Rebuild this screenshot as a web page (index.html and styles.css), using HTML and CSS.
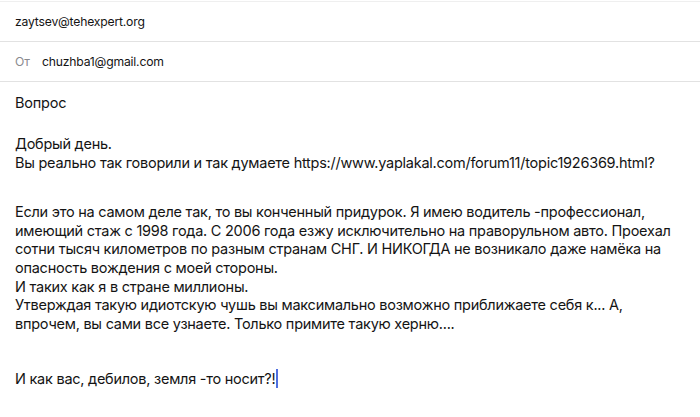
FILE: index.html
```html
<!DOCTYPE html>
<html lang="ru">
<head>
<meta charset="utf-8">
<link rel="stylesheet" href="styles.css">
</head>
<body>
<div class="mail">
  <div class="row row-to"><span class="addr">zaytsev@tehexpert.org</span></div>
  <div class="row row-from"><span class="label">От</span><span class="addr">chuzhba1@gmail.com</span></div>
  <div class="row row-subj"><span class="subject">Вопрос</span></div>
  <div class="body">
    <div class="line">Добрый день.</div>
    <div class="line">Вы реально так говорили и так думаете https://www.yaplakal.com/forum11/topic1926369.html?</div>
    <div class="gap gap-1"></div>
    <div class="line">Если это на самом деле так, то вы конченный придурок. Я имею водитель -профессионал,</div>
    <div class="line">имеющий стаж с 1998 года. С 2006 года езжу исключительно на праворульном авто. Проехал</div>
    <div class="line">сотни тысяч километров по разным странам СНГ. И НИКОГДА не возникало даже намёка на</div>
    <div class="line">опасность вождения с моей стороны.</div>
    <div class="line">И таких как я в стране миллионы.</div>
    <div class="line">Утверждая такую идиотскую чушь вы максимально возможно приближаете себя к... А,</div>
    <div class="line">впрочем, вы сами все узнаете. Только примите такую херню....</div>
    <div class="gap gap-2"></div>
    <div class="line">И как вас, дебилов, земля -то носит?!<span class="caret"></span></div>
  </div>
</div>
</body>
</html>
```

FILE: styles.css
```css
html, body {
  margin: 0;
  padding: 0;
  background: #ffffff;
}
body {
  font-family: Inter, "Noto Sans", "Liberation Sans", sans-serif;
  color: #141414;
  padding-top: 1px;
}
.mail {
  width: 700px;
  border-top: 1px solid #efefef;
}
.row {
  display: flex;
  align-items: center;
  padding-left: 15px;
  border-bottom: 1px solid #e2e2e2;
  height: 39px;
}
.row-subj {
  border-bottom: none;
  height: 40px;
}
.addr {
  font-size: 12.2px;
  letter-spacing: -0.2px;
}
.label {
  font-size: 12.2px;
  color: #8a8a8e;
  width: 27px;
}
.subject {
  font-size: 14.5px;
  letter-spacing: -0.2px;
}
.body {
  padding: 13px 15px 0 15px;
  font-size: 14.5px;
  letter-spacing: -0.25px;
  line-height: 18.6px;
}
.line {
  white-space: nowrap;
}
.gap-1 {
  height: 31px;
}
.gap-2 {
  height: 36px;
}
.caret {
  display: inline-block;
  width: 2px;
  height: 19px;
  background: #4f6fe0;
  vertical-align: -4px;
  margin-left: 1px;
}
```
